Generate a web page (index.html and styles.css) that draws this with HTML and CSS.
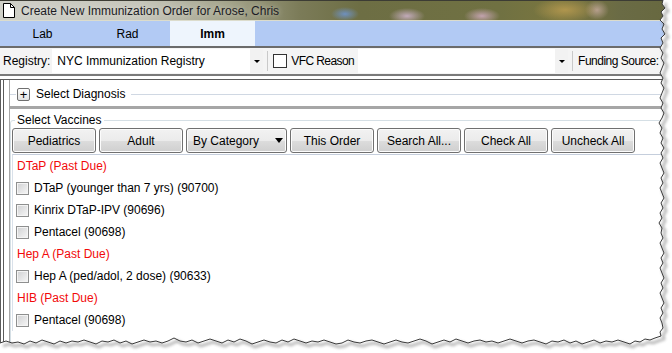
FILE: index.html
```html
<!DOCTYPE html>
<html lang="en">
<head>
  <meta charset="UTF-8">
  <title>Create New Immunization Order</title>
  <link rel="stylesheet" href="styles.css">
</head>
<body>
  <div class="window">
    <!-- title bar -->
    <div class="titlebar">
      <svg class="doc-icon" width="12" height="15" viewBox="0 0 12 15">
        <path d="M0.5 0.5 H7.5 L11.5 4.5 V14.5 H0.5 Z" fill="#fff" stroke="#000"/>
        <path d="M7.5 0.5 V4.5 H11.5" fill="none" stroke="#000"/>
      </svg>
      <span class="title">Create New Immunization Order for Arose, Chris</span>
    </div>

    <!-- tabs -->
    <div class="tabs">
      <div class="tab">Lab</div>
      <div class="tab">Rad</div>
      <div class="tab active">Imm</div>
    </div>

    <!-- registry toolbar -->
    <div class="toolbar">
      <span class="label">Registry:</span>
      <div class="combo registry">
        <span class="combo-text">NYC Immunization Registry</span>
        <span class="combo-btn"><span class="arrow"></span></span>
      </div>
      <span class="sep"></span>
      <span class="flat-check"></span>
      <span class="label vfc">VFC Reason</span>
      <div class="combo reason">
        <span class="combo-text"></span>
        <span class="combo-btn"><span class="arrow"></span></span>
      </div>
      <span class="sep"></span>
      <span class="label funding">Funding Source:</span>
    </div>

    <div class="panel">
      <div class="inner">
        <div class="diagnosis">
          <span class="gline short"></span>
          <span class="plus">+</span>
          <span class="diag-text">Select Diagnosis</span>
          <span class="gline long"></span>
        </div>
        <div class="splitter"></div>

        <fieldset class="vaccines">
          <legend>Select Vaccines</legend>
          <div class="buttons">
            <button class="btn">Pediatrics</button>
            <button class="btn">Adult</button>
            <button class="btn wide">By Category <span class="btn-arrow"></span></button>
            <button class="btn">This Order</button>
            <button class="btn">Search All...</button>
            <button class="btn">Check All</button>
            <button class="btn">Uncheck All</button>
          </div>
          <div class="list">
            <div class="row head">DTaP (Past Due)</div>
            <div class="row"><span class="check"></span>DTaP (younger than 7 yrs) (90700)</div>
            <div class="row"><span class="check"></span>Kinrix DTaP-IPV (90696)</div>
            <div class="row"><span class="check"></span>Pentacel (90698)</div>
            <div class="row head">Hep A (Past Due)</div>
            <div class="row"><span class="check"></span>Hep A (ped/adol, 2 dose) (90633)</div>
            <div class="row head">HIB (Past Due)</div>
            <div class="row"><span class="check"></span>Pentacel (90698)</div>
          </div>
        </fieldset>
      </div>
    </div>
  </div>

  <!-- torn paper edge over the screenshot -->
  <svg class="torn" width="672" height="353" viewBox="0 0 672 353">
    <defs>
      <filter id="blur" x="-5%" y="-5%" width="110%" height="110%">
        <feGaussianBlur stdDeviation="1.6"/>
      </filter>
    </defs>
    <path fill="#fff" d="M672,0 L663,0 L662,4 L665,8 L661,12 L663,16 L660,20 L664,24 L662,29 L665,34 L661,38 L663,43 L660,48 L663,53 L661,58 L664,63 L662,68 L660,73 L663,78 L661,83 L664,88 L662,93 L660,98 L663,103 L661,108 L664,113 L662,118 L659,123 L662,128 L660,133 L663,138 L661,143 L664,148 L661,153 L663,158 L660,163 L662,168 L664,173 L661,178 L663,183 L660,188 L662,193 L664,198 L661,203 L663,208 L660,213 L662,218 L659,223 L662,228 L661,233 L663,238 L660,243 L662,248 L664,253 L661,258 L663,263 L660,268 L662,273 L664,278 L661,283 L663,288 L660,293 L662,298 L664,303 L661,308 L663,313 L660,318 L662,323 L663,328 L660,332 L661,336 L655,338 L650,340 L645,339 L640,342 L635,341 L630,344 L624,342 L618,340 L612,342 L606,341 L600,343 L594,340 L588,342 L582,344 L576,341 L570,343 L564,340 L558,342 L552,341 L546,344 L540,342 L534,340 L528,341 L522,343 L516,341 L510,339 L504,341 L498,343 L492,341 L486,342 L480,340 L474,341 L468,343 L462,341 L456,339 L450,342 L444,340 L438,342 L432,344 L426,341 L420,339 L414,341 L408,343 L402,342 L396,340 L390,342 L384,344 L378,342 L372,340 L366,341 L360,343 L354,342 L348,340 L342,343 L336,344 L330,342 L324,340 L318,342 L312,341 L306,343 L300,341 L294,339 L288,342 L282,340 L276,343 L270,342 L264,340 L258,342 L252,344 L246,341 L240,339 L234,342 L228,340 L222,343 L216,341 L210,339 L204,341 L198,343 L192,340 L186,342 L180,341 L174,338 L168,341 L162,343 L156,341 L150,342 L144,340 L138,342 L132,344 L126,341 L120,343 L114,340 L108,342 L102,341 L96,344 L90,342 L84,340 L78,342 L72,341 L66,343 L60,341 L54,344 L48,342 L42,340 L36,343 L30,341 L24,344 L18,342 L12,343 L6,341 L0,343 L0,353 L672,353 Z"/>
    <g id="edge" fill="none">
      <path class="shadow" filter="url(#blur)" transform="translate(3,3)" d="M663,0 L662,4 L665,8 L661,12 L663,16 L660,20 L664,24 L662,29 L665,34 L661,38 L663,43 L660,48 L663,53 L661,58 L664,63 L662,68 L660,73 L663,78 L661,83 L664,88 L662,93 L660,98 L663,103 L661,108 L664,113 L662,118 L659,123 L662,128 L660,133 L663,138 L661,143 L664,148 L661,153 L663,158 L660,163 L662,168 L664,173 L661,178 L663,183 L660,188 L662,193 L664,198 L661,203 L663,208 L660,213 L662,218 L659,223 L662,228 L661,233 L663,238 L660,243 L662,248 L664,253 L661,258 L663,263 L660,268 L662,273 L664,278 L661,283 L663,288 L660,293 L662,298 L664,303 L661,308 L663,313 L660,318 L662,323 L663,328 L660,332 L661,336 L655,338 L650,340 L645,339 L640,342 L635,341 L630,344 L624,342 L618,340 L612,342 L606,341 L600,343 L594,340 L588,342 L582,344 L576,341 L570,343 L564,340 L558,342 L552,341 L546,344 L540,342 L534,340 L528,341 L522,343 L516,341 L510,339 L504,341 L498,343 L492,341 L486,342 L480,340 L474,341 L468,343 L462,341 L456,339 L450,342 L444,340 L438,342 L432,344 L426,341 L420,339 L414,341 L408,343 L402,342 L396,340 L390,342 L384,344 L378,342 L372,340 L366,341 L360,343 L354,342 L348,340 L342,343 L336,344 L330,342 L324,340 L318,342 L312,341 L306,343 L300,341 L294,339 L288,342 L282,340 L276,343 L270,342 L264,340 L258,342 L252,344 L246,341 L240,339 L234,342 L228,340 L222,343 L216,341 L210,339 L204,341 L198,343 L192,340 L186,342 L180,341 L174,338 L168,341 L162,343 L156,341 L150,342 L144,340 L138,342 L132,344 L126,341 L120,343 L114,340 L108,342 L102,341 L96,344 L90,342 L84,340 L78,342 L72,341 L66,343 L60,341 L54,344 L48,342 L42,340 L36,343 L30,341 L24,344 L18,342 L12,343 L6,341 L0,343"/>
      <path class="line" d="M663,0 L662,4 L665,8 L661,12 L663,16 L660,20 L664,24 L662,29 L665,34 L661,38 L663,43 L660,48 L663,53 L661,58 L664,63 L662,68 L660,73 L663,78 L661,83 L664,88 L662,93 L660,98 L663,103 L661,108 L664,113 L662,118 L659,123 L662,128 L660,133 L663,138 L661,143 L664,148 L661,153 L663,158 L660,163 L662,168 L664,173 L661,178 L663,183 L660,188 L662,193 L664,198 L661,203 L663,208 L660,213 L662,218 L659,223 L662,228 L661,233 L663,238 L660,243 L662,248 L664,253 L661,258 L663,263 L660,268 L662,273 L664,278 L661,283 L663,288 L660,293 L662,298 L664,303 L661,308 L663,313 L660,318 L662,323 L663,328 L660,332 L661,336 L655,338 L650,340 L645,339 L640,342 L635,341 L630,344 L624,342 L618,340 L612,342 L606,341 L600,343 L594,340 L588,342 L582,344 L576,341 L570,343 L564,340 L558,342 L552,341 L546,344 L540,342 L534,340 L528,341 L522,343 L516,341 L510,339 L504,341 L498,343 L492,341 L486,342 L480,340 L474,341 L468,343 L462,341 L456,339 L450,342 L444,340 L438,342 L432,344 L426,341 L420,339 L414,341 L408,343 L402,342 L396,340 L390,342 L384,344 L378,342 L372,340 L366,341 L360,343 L354,342 L348,340 L342,343 L336,344 L330,342 L324,340 L318,342 L312,341 L306,343 L300,341 L294,339 L288,342 L282,340 L276,343 L270,342 L264,340 L258,342 L252,344 L246,341 L240,339 L234,342 L228,340 L222,343 L216,341 L210,339 L204,341 L198,343 L192,340 L186,342 L180,341 L174,338 L168,341 L162,343 L156,341 L150,342 L144,340 L138,342 L132,344 L126,341 L120,343 L114,340 L108,342 L102,341 L96,344 L90,342 L84,340 L78,342 L72,341 L66,343 L60,341 L54,344 L48,342 L42,340 L36,343 L30,341 L24,344 L18,342 L12,343 L6,341 L0,343"/>
    </g>
  </svg>
</body>
</html>
```

FILE: styles.css
```css
body {
  margin: 0;
  background: #fff;
  font-family: "Liberation Sans", Arial, sans-serif;
  font-size: 12px;
  color: #000;
  overflow: hidden;
}
.window {
  width: 672px;
  height: 353px;
  overflow: hidden;
}

/* title bar (aero glass) */
.titlebar {
  height: 19px;
  display: flex;
  align-items: center;
  gap: 6px;
  padding-left: 3px;
  border-top: 1px solid #3c3c34;
  border-bottom: 1px solid #dcdccc;
  background:
    radial-gradient(14px 7px at 345px 13px, rgba(110, 150, 210, 0.85), transparent),
    radial-gradient(18px 8px at 407px 15px, rgba(215, 185, 215, 0.8), transparent),
    radial-gradient(18px 8px at 482px 15px, rgba(215, 175, 200, 0.8), transparent),
    radial-gradient(32px 12px at 565px 9px, rgba(185, 155, 80, 0.85), transparent),
    radial-gradient(12px 10px at 597px 9px, rgba(205, 175, 165, 0.75), transparent),
    linear-gradient(90deg, #cfd0c8 0, #c6c6bb 140px, #a3a38a 230px, #7b7b58 300px, #6d6e44 360px, #707142 500px, #7a763f 560px, #6a6b45 620px, #67683f 672px);
}
.doc-icon {
  display: block;
}
.title {
  color: #1b1b24;
  text-shadow: 0 0 6px rgba(255, 255, 255, 0.6);
}

/* tabs */
.tabs {
  display: flex;
  height: 25px;
  background: #b2caf4;
  border-bottom: 2px solid #6b6b6b;
}
.tab {
  width: 85px;
  display: flex;
  align-items: center;
  justify-content: center;
}
.tab.active {
  background: #eef5fd;
  font-weight: bold;
}

/* registry toolbar */
.toolbar {
  height: 26px;
  display: flex;
  align-items: center;
  padding-left: 3px;
  background: #f4f4f4;
  border-bottom: 2px solid #7a7a7a;
}
.toolbar > * {
  flex-shrink: 0;
  white-space: nowrap;
}
.combo {
  height: 24px;
  display: flex;
  align-items: center;
  background: #fff;
}
.combo.registry {
  width: 211px;
  margin-left: 2px;
}
.combo.reason {
  width: 210px;
  margin-left: 4px;
}
.combo-text {
  flex: 1;
  padding-left: 5px;
}
.combo-btn {
  width: 13px;
  height: 100%;
  display: flex;
  align-items: center;
  justify-content: center;
  background: #f2f2f2;
}
.arrow {
  width: 0;
  height: 0;
  border-left: 3px solid transparent;
  border-right: 3px solid transparent;
  border-top: 3px solid #000;
}
.sep {
  width: 1px;
  height: 20px;
  background: #c9c9c9;
  margin: 0 5px 0 4px;
}
.flat-check {
  width: 12px;
  height: 12px;
  border: 1px solid #333;
  background: #fff;
}
.vfc {
  margin-left: 4px;
  letter-spacing: -0.6px;
}
.funding {
  letter-spacing: -0.5px;
}

/* main panel */
.panel {
  margin-top: 3px;
  height: 300px;
  border-top: 1px solid #5c5c5c;
  border-left: 1px solid #5c5c5c;
  box-shadow: inset 2px 0 0 #fff, inset 3px 0 0 #5c5c5c;
}
.inner {
  margin-left: 8px;
  height: 100%;
  border-left: 1px solid #a8a8a8;
}
.diagnosis {
  height: 24px;
  padding-top: 2px;
  display: flex;
  align-items: center;
}
.gline {
  height: 1px;
  background: #d0d8e3;
}
.gline.short {
  width: 6px;
}
.gline.long {
  flex: 1;
  margin-left: 6px;
}
.plus {
  width: 11px;
  height: 11px;
  margin-left: 1px;
  border: 1px solid #6f6f6f;
  border-radius: 2px;
  background: linear-gradient(#fff, #e2e2e2);
  display: flex;
  align-items: center;
  justify-content: center;
  font-size: 13px;
  line-height: 11px;
}
.diag-text {
  margin-left: 6px;
}
.splitter {
  height: 3px;
  margin-left: -1px;
  background: #a6a6a6;
}

/* vaccines group */
.vaccines {
  margin: 4px 0 0 0;
  padding: 1px 0 0 1px;
  height: 260px;
  border: 1px solid #d5dfe5;
  border-radius: 3px;
  min-width: 0;
}
.vaccines legend {
  margin-left: 3px;
  padding: 0 2px;
  line-height: 14px;
}
.buttons {
  display: flex;
  gap: 3px;
}
.btn {
  width: 84px;
  height: 25px;
  padding: 0;
  font-family: "Liberation Sans", Arial, sans-serif;
  font-size: 12px;
  color: #000;
  border: 1px solid #707070;
  border-radius: 3px;
  box-shadow: inset 0 0 0 1px #fcfcfc;
  background: linear-gradient(#f2f2f2 0, #ebebeb 50%, #dddddd 50%, #cfcfcf 100%);
}
.btn.wide {
  width: 101px;
  display: flex;
  align-items: center;
  padding-left: 6px;
}
.btn-arrow {
  margin-left: auto;
  margin-right: 3px;
  width: 0;
  height: 0;
  border-left: 4px solid transparent;
  border-right: 4px solid transparent;
  border-top: 5px solid #000;
}
.list {
  margin-top: 1px;
  border-top: 1px solid #c5cedc;
  border-left: 1px solid #d9e1ea;
}
.row {
  height: 22px;
  display: flex;
  align-items: center;
  padding-left: 3px;
}
.row.head {
  padding-left: 4px;
  color: #f20a0a;
}
.check {
  width: 11px;
  height: 11px;
  margin-right: 5px;
  border: 1px solid #8e8f8f;
  box-shadow: inset 0 0 0 1px #f4f4f4;
  background: linear-gradient(135deg, #cfd0d2, #f7f7f7);
}

/* torn paper edge */
.torn {
  position: absolute;
  top: 0;
  left: 0;
  pointer-events: none;
}
.torn .shadow {
  stroke: #7a7a7a;
  stroke-width: 2.5;
  opacity: 0.6;
}
.torn .line {
  stroke: #3a3a3a;
  stroke-width: 1;
}
```
